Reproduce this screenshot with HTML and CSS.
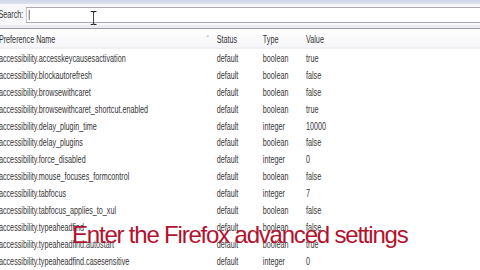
FILE: index.html
```html
<!DOCTYPE html>
<html lang="en">
<head>
    <meta charset="utf-8">
    <title>about:config</title>
    <link rel="stylesheet" href="styles.css">
</head>
<body>
    <div class="screen">
        <div class="chrome"></div>
        <div class="search-row">
            <label for="search" class="search-label">Search:</label>
            <div class="search-box">
                <span class="caret"></span>
                <svg class="ibeam" width="10" height="14" viewBox="0 0 10 14">
                    <path d="M1 0.5h3l1 1 1-1h3M5 1.5v11M1 13.5h3l1-1 1 1h3" fill="none" stroke="#222" stroke-width="1.2"/>
                </svg>
            </div>
        </div>

        <div class="prefs">
            <div class="row head">
                <span class="col-name">Preference Name</span>
                <span class="sort">&#710;</span>
                <span class="col-status">Status</span>
                <span class="col-type">Type</span>
                <span class="col-value">Value</span>
            </div>
            <div class="row"><span class="col-name">accessibility.accesskeycausesactivation</span><span class="col-status">default</span><span class="col-type">boolean</span><span class="col-value">true</span></div>
            <div class="row"><span class="col-name">accessibility.blockautorefresh</span><span class="col-status">default</span><span class="col-type">boolean</span><span class="col-value">false</span></div>
            <div class="row"><span class="col-name">accessibility.browsewithcaret</span><span class="col-status">default</span><span class="col-type">boolean</span><span class="col-value">false</span></div>
            <div class="row"><span class="col-name">accessibility.browsewithcaret_shortcut.enabled</span><span class="col-status">default</span><span class="col-type">boolean</span><span class="col-value">true</span></div>
            <div class="row"><span class="col-name">accessibility.delay_plugin_time</span><span class="col-status">default</span><span class="col-type">integer</span><span class="col-value">10000</span></div>
            <div class="row"><span class="col-name">accessibility.delay_plugins</span><span class="col-status">default</span><span class="col-type">boolean</span><span class="col-value">false</span></div>
            <div class="row"><span class="col-name">accessibility.force_disabled</span><span class="col-status">default</span><span class="col-type">integer</span><span class="col-value">0</span></div>
            <div class="row"><span class="col-name">accessibility.mouse_focuses_formcontrol</span><span class="col-status">default</span><span class="col-type">boolean</span><span class="col-value">false</span></div>
            <div class="row"><span class="col-name">accessibility.tabfocus</span><span class="col-status">default</span><span class="col-type">integer</span><span class="col-value">7</span></div>
            <div class="row"><span class="col-name">accessibility.tabfocus_applies_to_xul</span><span class="col-status">default</span><span class="col-type">boolean</span><span class="col-value">false</span></div>
            <div class="row"><span class="col-name">accessibility.typeaheadfind</span><span class="col-status">default</span><span class="col-type">boolean</span><span class="col-value">false</span></div>
            <div class="row"><span class="col-name">accessibility.typeaheadfind.autostart</span><span class="col-status">default</span><span class="col-type">boolean</span><span class="col-value">true</span></div>
            <div class="row"><span class="col-name">accessibility.typeaheadfind.casesensitive</span><span class="col-status">default</span><span class="col-type">integer</span><span class="col-value">0</span></div>
        </div>
    </div>

    <div class="caption">Enter the Firefox advanced settings</div>
</body>
</html>
```

FILE: styles.css
```css
* {
    margin: 0;
    padding: 0;
    box-sizing: border-box;
}

body {
    width: 480px;
    height: 270px;
    overflow: hidden;
    position: relative;
    background: #fff;
    font-family: 'Liberation Sans', Arial, sans-serif;
    font-size: 10px;
    color: #363636;
}

/* the captured screen is squeezed sideways, so lay it out wide and squeeze it back */
.screen {
    width: 667px;
    overflow: hidden;
    transform: scaleX(0.72);
    transform-origin: 0 0;
}

.chrome {
    height: 4px;
    background: linear-gradient(#cfd6e6, #dde2ee);
}

.search-row {
    display: flex;
    align-items: center;
    height: 24px;
    background: #f7f7fa;
    border-bottom: 3px solid #ececf0;
}

.search-label {
    width: 36px;
    text-indent: -2px;
}

.search-box {
    position: relative;
    flex: 1;
    height: 16px;
    background: #fff;
    border: 1px solid #a9abb3;
    border-right: none;
}

.caret {
    position: absolute;
    left: 3px;
    top: 2px;
    width: 1.4px;
    height: 10px;
    background: #333;
}

.ibeam {
    position: absolute;
    left: 88px;
    top: 3px;
}

.row {
    display: flex;
    align-items: center;
    height: 16.9px;
    white-space: nowrap;
}

.row.head {
    position: relative;
    height: 21px;
    padding-top: 2px;
    margin-bottom: 1px;
    border-top: 1px solid #9c9ca4;
    border-bottom: 2px solid #f0f0f4;
    background: linear-gradient(#ffffff, #f6f6f9);
    color: #333;
}

.sort {
    position: absolute;
    left: 287px;
    top: 5px;
    color: #999;
    font-size: 9px;
}

.col-name {
    width: 301px;
    text-indent: -1.5px;
}

.col-status {
    width: 64px;
}

.col-type {
    width: 60px;
}

.col-value {
    flex: 1;
}

.caption {
    position: absolute;
    left: 72px;
    top: 221px;
    font-size: 24px;
    color: #b3122e;
    letter-spacing: -1.2px;
    white-space: nowrap;
}
```
